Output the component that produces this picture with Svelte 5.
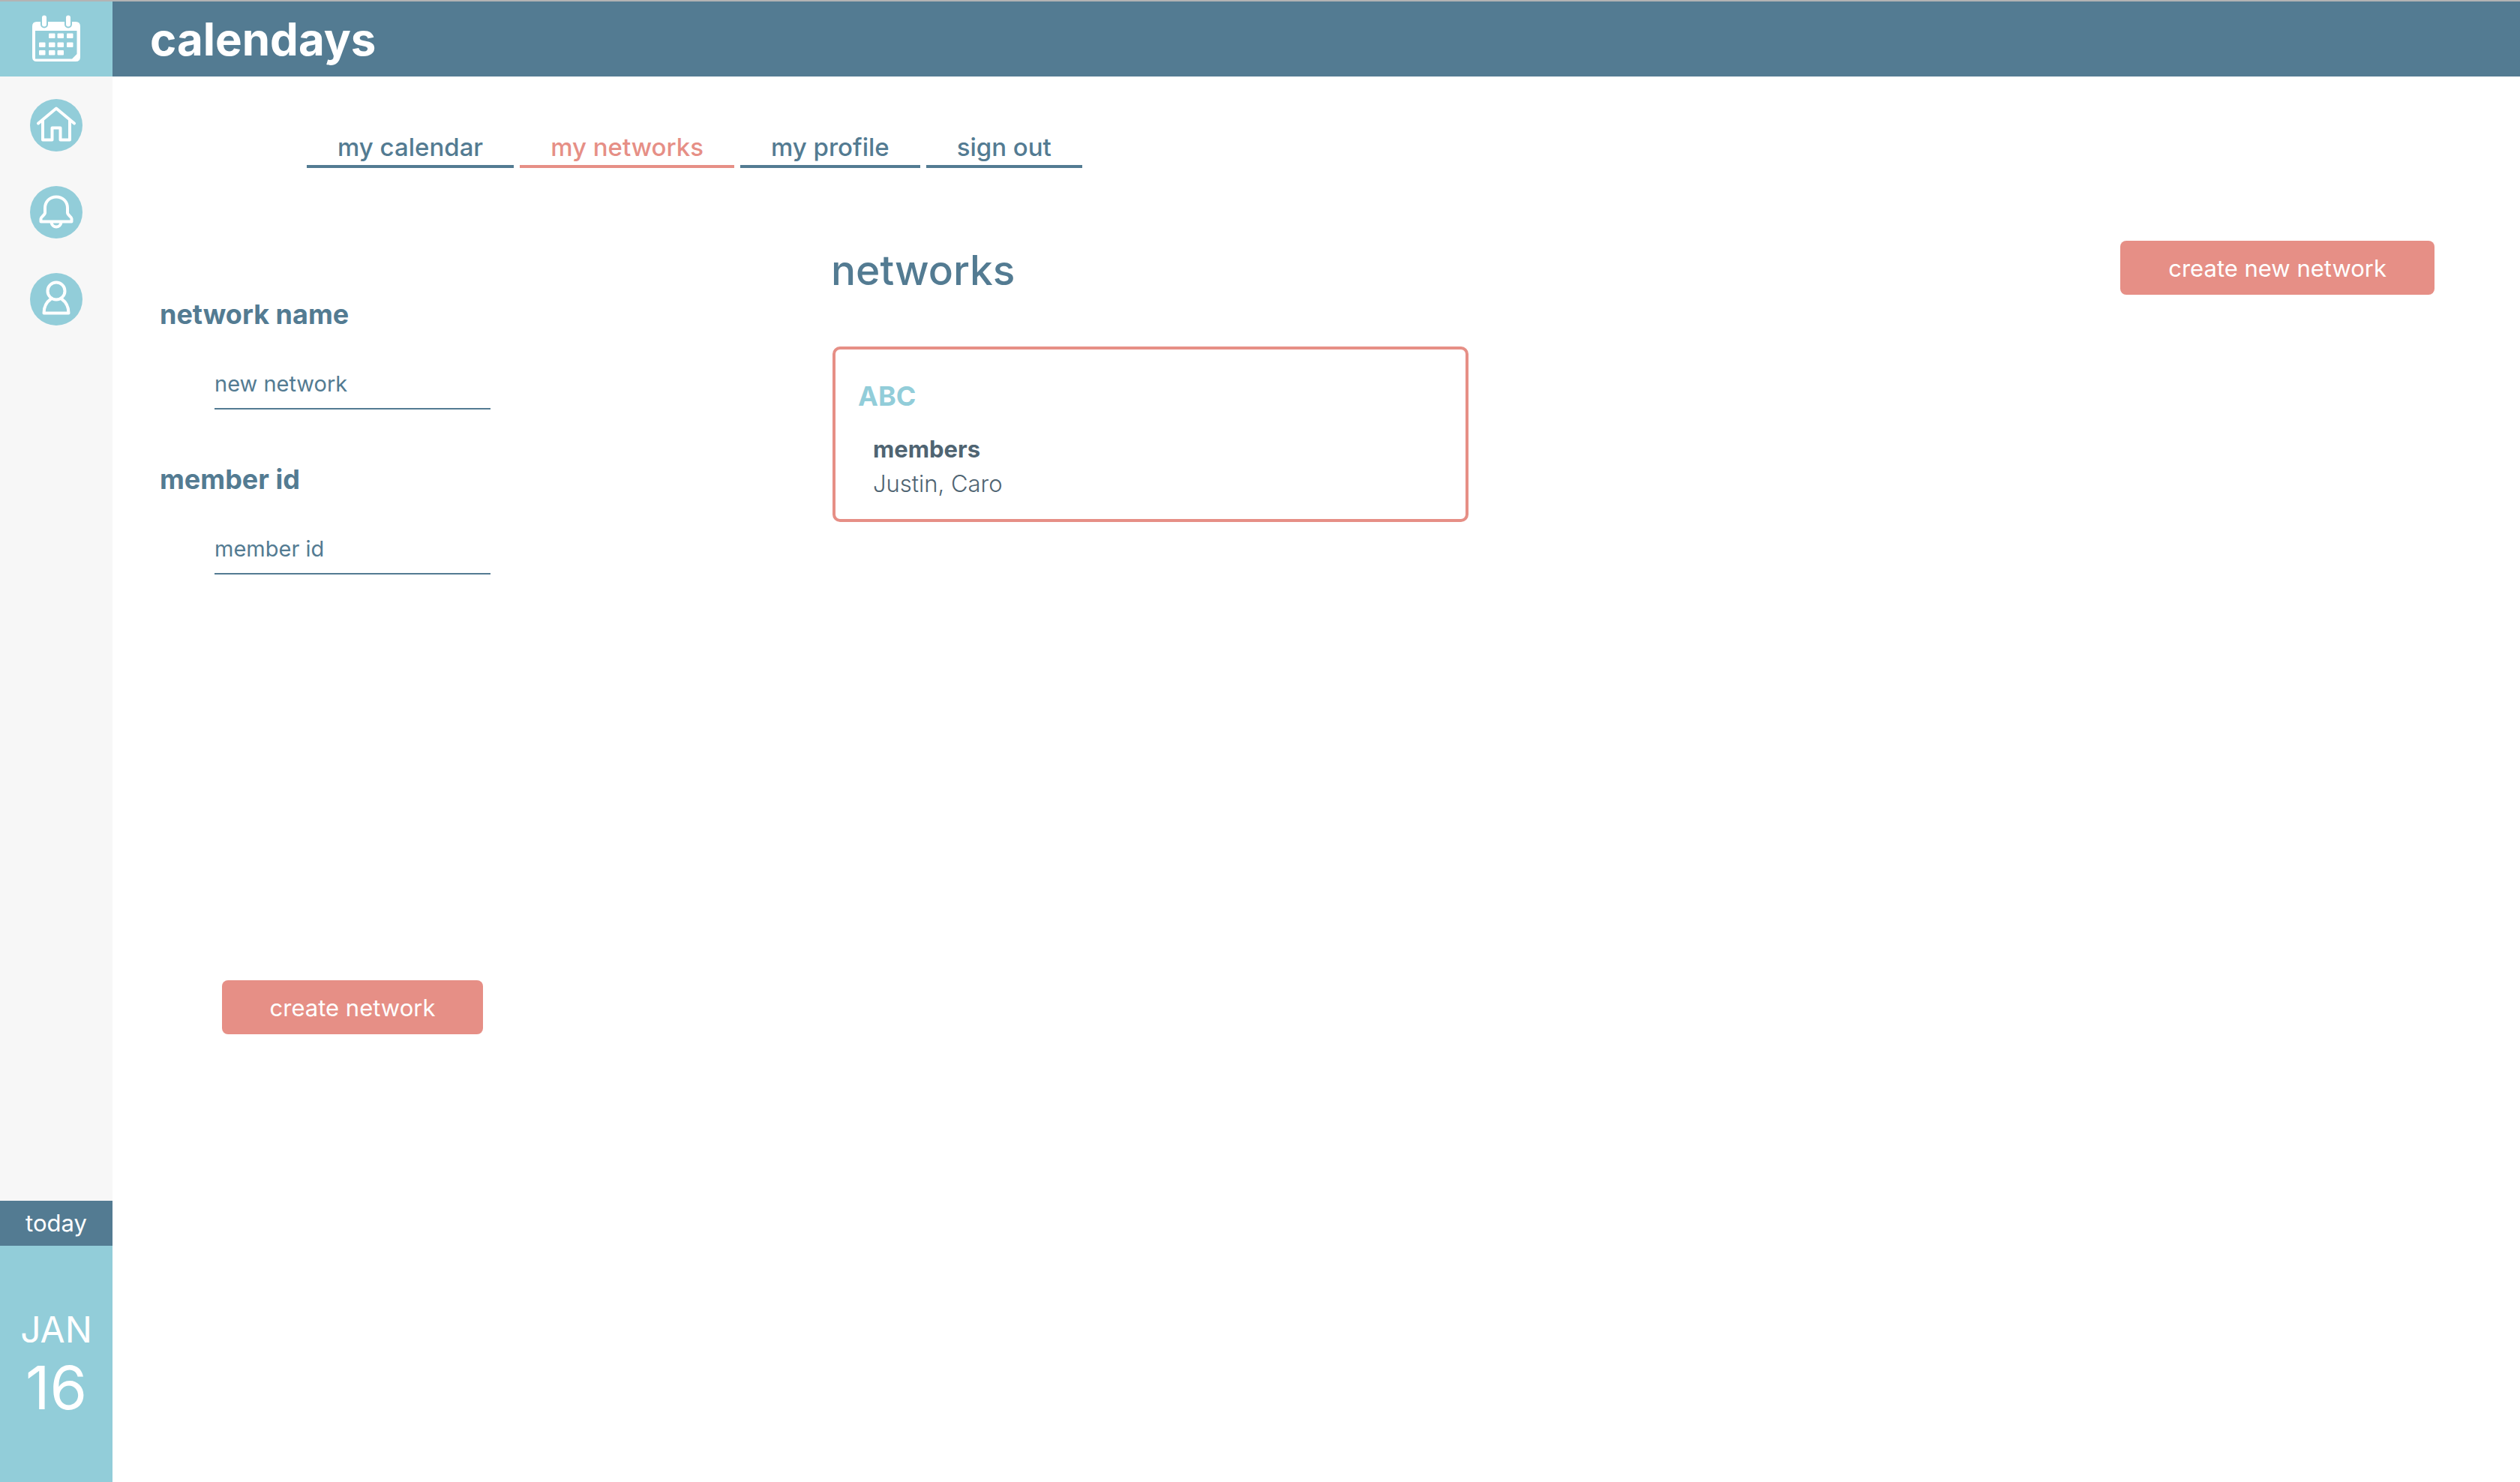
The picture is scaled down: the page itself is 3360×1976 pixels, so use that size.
<script>
  const tabs = [
    { label: 'my calendar', href: '#calendar' },
    { label: 'my networks', href: '#networks', active: true },
    { label: 'my profile', href: '#profile' },
    { label: 'sign out', href: '#signout' }
  ];
  const networks = [{ name: 'ABC', members: ['Justin', 'Caro'] }];
  let networkName = $state('');
  let memberId = $state('');
</script>

<div class="app">
  <aside class="sidebar">
    <a class="logo" href="#top" aria-label="calendays">
      <svg width="64" height="64" viewBox="0 0 64 64" aria-hidden="true">
        <path class="solid" fill-rule="evenodd" d="M6 9H58Q64 9 64 15V56Q64 62 58 62H6Q0 62 0 56V15Q0 9 6 9ZM4 21V58.500H53L59.500 52V21Z" />
        <path class="ring" d="M16 3.500V12.500M48 3.500V12.500" />
        <path class="pin" d="M16 3.500V12.500M48 3.500V12.500" />
        <g class="solid">
          <rect x="22" y="24.500" width="8.500" height="6.500" rx="1" />
          <rect x="33.500" y="24.500" width="8.500" height="6.500" rx="1" />
          <rect x="46" y="24.500" width="8.500" height="6.500" rx="1" />
          <rect x="9" y="36.500" width="8.500" height="6.500" rx="1" />
          <rect x="22" y="36.500" width="8.500" height="6.500" rx="1" />
          <rect x="33.500" y="36.500" width="8.500" height="6.500" rx="1" />
          <rect x="46" y="36.500" width="8.500" height="6.500" rx="1" />
          <rect x="9" y="47" width="8.500" height="6.500" rx="1" />
          <rect x="22" y="47" width="8.500" height="6.500" rx="1" />
          <rect x="33.500" y="47" width="8.500" height="6.500" rx="1" />
        </g>
      </svg>
    </a>
    <nav class="shortcuts" aria-label="Shortcuts">
      <a href="#home" aria-label="home">
        <svg width="70" height="70" viewBox="0 0 70 70" aria-hidden="true">
          <circle cx="35" cy="35" r="35" />
          <path d="M11 32.500L35 12.500L59 32.500M17 28V54.500H29.500V38.500H40.500V54.500H53V28" />
        </svg>
      </a>
      <a href="#alerts" aria-label="notifications">
        <svg width="70" height="70" viewBox="0 0 70 70" aria-hidden="true">
          <circle cx="35" cy="35" r="35" />
          <path d="M14.500 47.500V43.500C14.500 41 20 39 20 35.500V29.500C20 20.500 26.500 14.500 35 14.500S50 20.500 50 29.500V35.500C50 39 55.500 41 55.500 43.500V47.500Z" />
          <path d="M28.500 48.500C29.500 56.500 40.500 56.500 41.500 48.500" />
        </svg>
      </a>
      <a href="#account" aria-label="account">
        <svg width="70" height="70" viewBox="0 0 70 70" aria-hidden="true">
          <circle cx="35" cy="35" r="35" />
          <circle class="line" cx="35" cy="24" r="11.500" />
          <path d="M28 34.500C21.500 39 18.500 45.500 18.500 53.500H51.500C51.500 45.500 48.500 39 42 34.500" />
        </svg>
      </a>
    </nav>
    <div class="today">today</div>
    <time class="date" datetime="01-16">
      <span class="month">JAN</span>
      <span class="day">16</span>
    </time>
  </aside>

  <div class="page">
    <header><h1>calendays</h1></header>

    <nav class="tabs" aria-label="Main">
      {#each tabs as tab}
        <a href={tab.href} class:active={tab.active} aria-current={tab.active ? 'page' : undefined}>{tab.label}</a>
      {/each}
    </nav>

    <main>
      <div class="side">
        <form onsubmit={(e) => e.preventDefault()}>
          <div class="field">
            <label for="network-name">network name</label>
            <input id="network-name" type="text" placeholder="new network" bind:value={networkName} />
          </div>
          <div class="field">
            <label for="member-id">member id</label>
            <input id="member-id" type="text" placeholder="member id" bind:value={memberId} />
          </div>
          <button class="submit" type="submit">create network</button>
        </form>
      </div>

      <section>
        <div class="heading">
          <h2>networks</h2>
          <button type="button">create new network</button>
        </div>
        {#each networks as network}
          <article>
            <h3>{network.name}</h3>
            <div class="members">
              <h4>members</h4>
              <p>{network.members.join(', ')}</p>
            </div>
          </article>
        {/each}
      </section>
    </main>
  </div>
</div>

<style>
  :global(body) {
    background: #fff;
  }
  .app {
    --blue: #537b92;
    --teal: #92cdd9;
    --coral: #e68f86;
    display: flex;
    box-sizing: border-box;
    min-height: 100vh;
    border-top: 2px solid #b3b3b3;
    font-family: Inter, 'Liberation Sans', sans-serif;
    color: var(--blue);
  }
  h1, h2, h3, h4, p {
    margin: 0;
  }
  a {
    color: inherit;
    text-decoration: none;
  }
  .sidebar {
    flex: 0 0 150px;
    display: flex;
    flex-direction: column;
    background: #f7f7f7;
    color: #fff;
    text-align: center;
  }
  .logo {
    display: flex;
    align-items: center;
    justify-content: center;
    height: 100px;
    background: var(--teal);
  }
  .solid {
    fill: #fff;
  }
  .ring, .pin {
    fill: none;
    stroke-linecap: round;
  }
  .ring {
    stroke: var(--teal);
    stroke-width: 10px;
  }
  .pin {
    stroke: #fff;
    stroke-width: 6px;
  }
  .shortcuts {
    flex: 1;
    display: flex;
    flex-direction: column;
    align-items: center;
    gap: 46px;
    padding-top: 30px;
  }
  .shortcuts a, .shortcuts svg {
    display: block;
  }
  .shortcuts circle {
    fill: var(--teal);
  }
  .shortcuts path, .shortcuts .line {
    fill: none;
    stroke: #fff;
    stroke-width: 4px;
    stroke-linecap: round;
    stroke-linejoin: round;
  }
  .today {
    background: var(--blue);
    font-size: 31px;
    line-height: 60px;
  }
  .date {
    display: flex;
    flex-direction: column;
    box-sizing: border-box;
    height: 315px;
    padding-top: 80px;
    background: var(--teal);
  }
  .month {
    font-size: 48px;
    line-height: 64px;
  }
  .day {
    font-size: 80px;
    line-height: 90px;
  }
  .page {
    flex: 1;
    min-width: 0;
  }
  header {
    background: var(--blue);
    color: #fff;
    padding-left: 50px;
  }
  h1 {
    font-size: 60px;
    line-height: 100px;
    font-weight: 700;
  }
  .tabs {
    display: flex;
    gap: 8px;
    padding: 70px 0 0 259px;
  }
  .tabs a {
    padding: 0 41px;
    border-bottom: 4px solid var(--blue);
    font-size: 33px;
    line-height: 48px;
    font-weight: 500;
  }
  .tabs .active {
    border-color: var(--coral);
    color: var(--coral);
  }
  main {
    display: flex;
    padding: 97px 114px 0 0;
  }
  .side {
    flex: 0 0 960px;
  }
  form {
    display: flex;
    flex-direction: column;
    align-items: center;
    width: 514px;
    margin-left: 63px;
    padding-top: 70px;
  }
  .field {
    display: flex;
    flex-direction: column;
    align-items: center;
    width: 100%;
    margin-bottom: 65px;
  }
  label {
    align-self: flex-start;
    font-size: 36px;
    line-height: 56px;
    font-weight: 700;
  }
  input {
    box-sizing: border-box;
    width: 368px;
    height: 66px;
    margin-top: 33px;
    padding: 0 0 2px;
    border: 0;
    border-bottom: 2px solid var(--blue);
    background: none;
    font: 400 29px Inter, 'Liberation Sans', sans-serif;
    color: var(--blue);
    outline: none;
  }
  input::placeholder {
    color: var(--blue);
    opacity: 1;
  }
  button {
    height: 72px;
    padding: 0 64px;
    border: 0;
    border-radius: 8px;
    background: var(--coral);
    color: #fff;
    font: 400 31px Inter, 'Liberation Sans', sans-serif;
    cursor: pointer;
  }
  .submit {
    margin-top: 476px;
  }
  section {
    flex: 1;
    min-width: 0;
  }
  .heading {
    display: flex;
    align-items: flex-start;
    justify-content: space-between;
    margin-bottom: 63px;
  }
  h2 {
    font-size: 55px;
    line-height: 78px;
    margin-left: -2px;
    font-weight: 500;
  }
  article {
    box-sizing: border-box;
    max-width: 848px;
    padding: 34px 30px 24px;
    border: 4px solid var(--coral);
    border-radius: 10px;
  }
  h3 {
    font-size: 36px;
    line-height: 56px;
    font-weight: 700;
    color: var(--teal);
  }
  .members {
    padding: 20px 20px 0;
    color: #4f6472;
    font-size: 31px;
    line-height: 46px;
  }
  h4 {
    font-size: 31px;
    font-weight: 700;
  }
  p {
    font-weight: 300;
  }
</style>
